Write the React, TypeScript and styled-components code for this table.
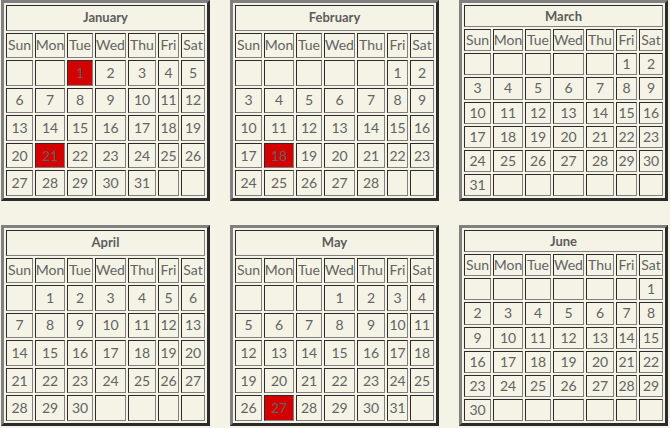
import React from "react";
import styled, { createGlobalStyle } from "styled-components";

// --- CONSTANTS ---
const BG = "#f5f3e6";
const DARK = "#2b2b2b";
const LIGHT = "#808080";
const TEXT = "#636363";
const TODAY = "#d40000";

const DAY_NAMES = ["Sun", "Mon", "Tue", "Wed", "Thu", "Fri", "Sat"];

type Month = { name: string; offset: number; days: number; marked: number[] };

const MONTHS: Month[] = [
  { name: "January", offset: 2, days: 31, marked: [1, 21] },
  { name: "February", offset: 5, days: 28, marked: [18] },
  { name: "March", offset: 5, days: 31, marked: [] },
  { name: "April", offset: 1, days: 30, marked: [] },
  { name: "May", offset: 3, days: 31, marked: [27] },
  { name: "June", offset: 6, days: 30, marked: [] },
];

const GlobalStyle = createGlobalStyle`
  html, body {
    margin: 0;
    padding: 0;
    background: ${BG};
  }
  body {
    font-family: "Lato", "Open Sans", sans-serif;
    color: ${TEXT};
  }
`;

// --- LAYOUT ---
const Page = styled.div`
  display: grid;
  grid-template-columns: repeat(3, 209px);
  column-gap: 20px;
  row-gap: 24px;
  padding-left: 1px;
`;

const Calendar = styled.div`
  box-sizing: border-box;
  height: 201px;
  display: grid;
  grid-template-columns: 27px 30px 26px 31px 28px 21px 24px;
  grid-auto-rows: 1fr;
  gap: 2px;
  padding: 2px;
  border: 3px solid;
  border-color: ${LIGHT} ${DARK} ${DARK} ${LIGHT};
  background: ${BG};
`;

const Cell = styled.div<{ $today?: boolean }>`
  box-sizing: border-box;
  display: flex;
  align-items: center;
  justify-content: center;
  border: 1px solid;
  border-color: ${DARK} ${LIGHT} ${LIGHT} ${DARK};
  background: ${(p) => (p.$today ? TODAY : BG)};
  font-size: 14px;
  line-height: 1;
  overflow: hidden;
  white-space: nowrap;
`;

const Title = styled(Cell)`
  grid-column: 1 / -1;
  font-size: 13px;
  font-weight: 700;
  color: #5c5c5c;
`;

const MonthCalendar: React.FC<{ month: Month }> = ({ month }) => {
  const cells: (number | null)[] = [];
  for (let i = 0; i < month.offset; i++) cells.push(null);
  for (let d = 1; d <= month.days; d++) cells.push(d);
  while (cells.length % 7 !== 0) cells.push(null);

  return (
    <Calendar>
      <Title>{month.name}</Title>
      {DAY_NAMES.map((d) => (
        <Cell key={d}>{d}</Cell>
      ))}
      {cells.map((d, i) => (
        <Cell key={i} $today={d !== null && month.marked.includes(d)}>
          {d ?? ""}
        </Cell>
      ))}
    </Calendar>
  );
};

const App: React.FC = () => (
  <>
    <GlobalStyle />
    <Page>
      {MONTHS.map((m) => (
        <MonthCalendar key={m.name} month={m} />
      ))}
    </Page>
  </>
);

export default App;
